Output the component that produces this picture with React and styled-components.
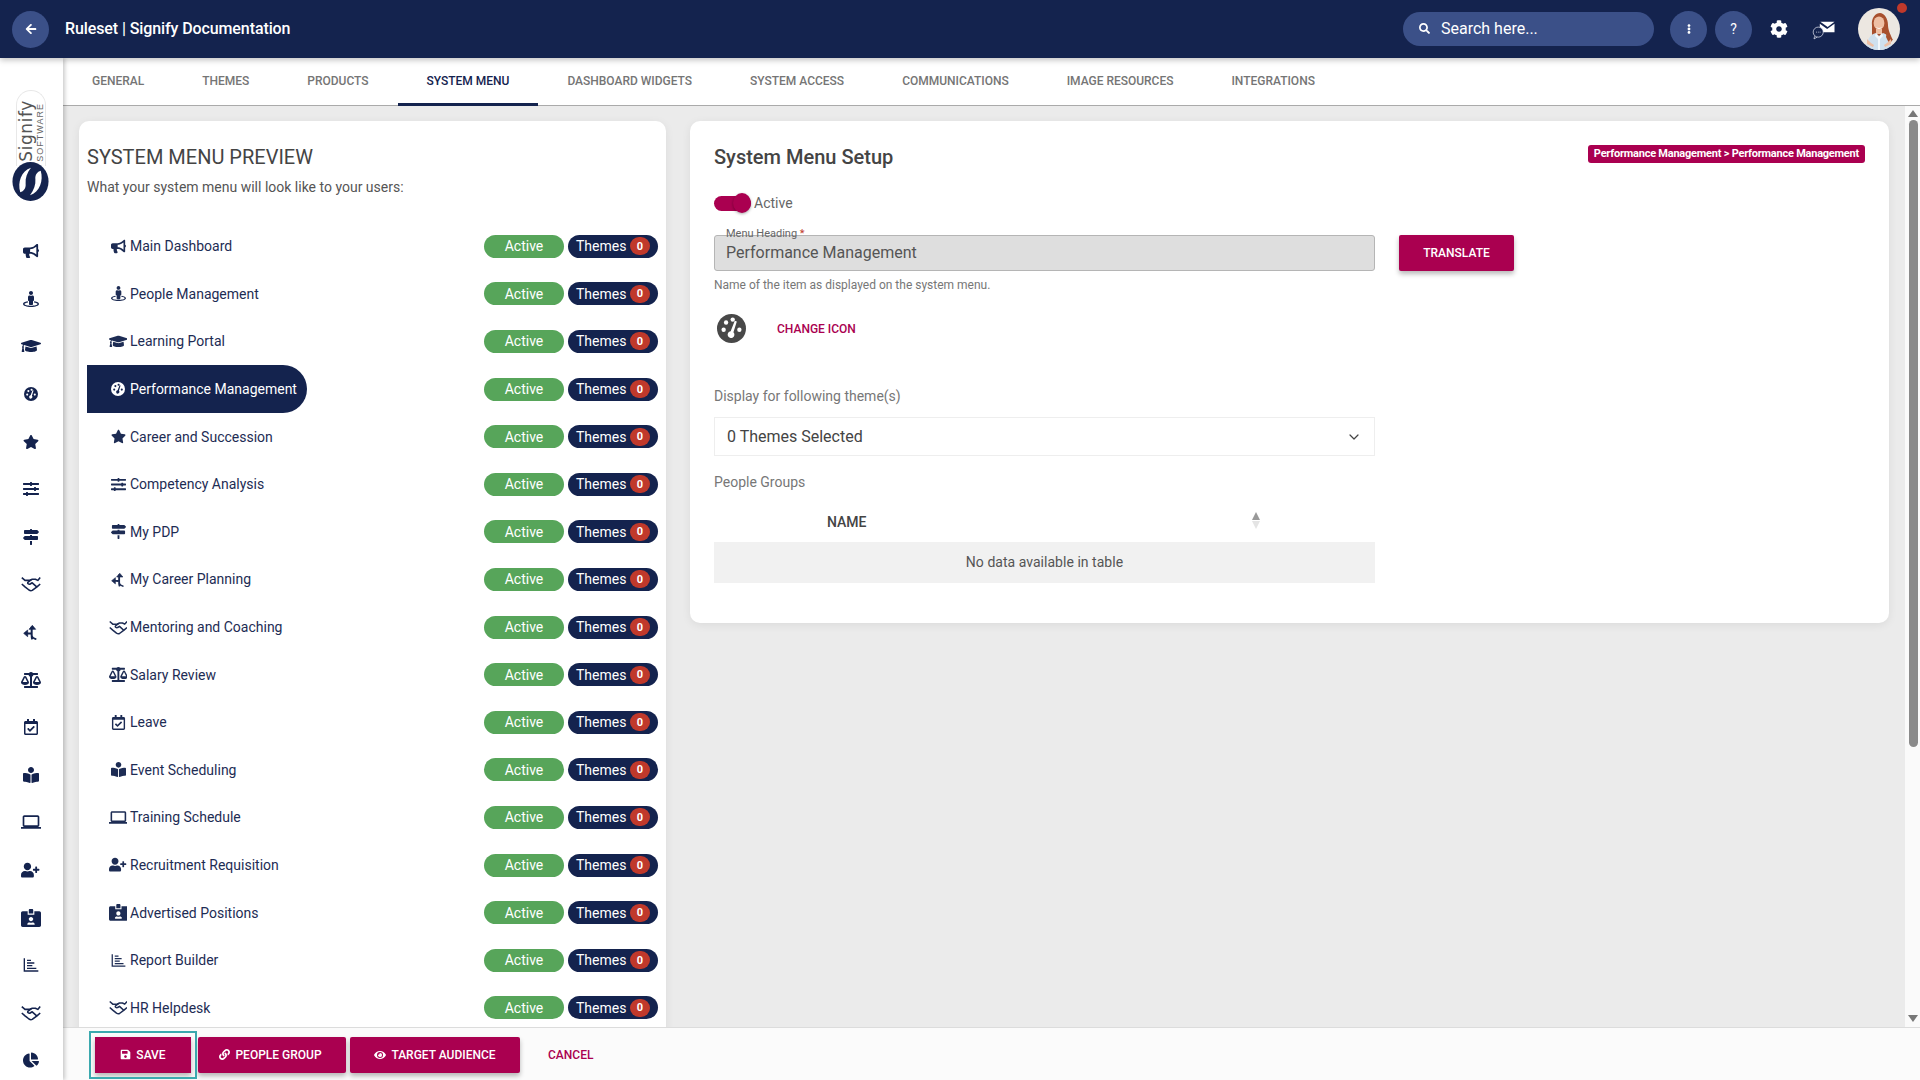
import React from "react";
import styled, { createGlobalStyle } from "styled-components";
import {
  FaArrowLeft, FaBalanceScale, FaBookReader, FaBullhorn, FaChartPie, FaCog, FaEllipsisV, FaEye,
  FaGraduationCap, FaIdCardAlt, FaLink, FaMapSigns, FaRegCalendarCheck,
  FaSave, FaSearch, FaSlidersH, FaStar, FaStreetView, FaUserPlus,
} from "react-icons/fa";
import { MdLaptop } from "react-icons/md";
import { ChevronDown } from "lucide-react";

const NAVY = "#14234e";
const BLUE = "#3b5088";
const WINE = "#aa0050";

const GlobalStyle = createGlobalStyle`
  html, body { margin: 0; padding: 0; height: 100%; overflow: hidden; }
  body { font-family: Roboto, "Liberation Sans", sans-serif; background: #ebebeb; }
  * { box-sizing: border-box; }
`;

const Page = styled.div`
  display: flex;
  flex-direction: column;
  height: 100vh;
`;

const Header = styled.header`
  display: flex;
  align-items: center;
  flex: 0 0 58px;
  padding: 0 20px 0 12px;
  background: ${NAVY};
  color: #fff;
  box-shadow: 0 2px 6px rgba(0, 0, 0, 0.25);
  position: relative;
  z-index: 3;
`;

const RoundButton = styled.div`
  display: flex;
  align-items: center;
  justify-content: center;
  width: 37px;
  height: 37px;
  border-radius: 50%;
  background: ${BLUE};
  font-size: 14px;
  margin-left: ${(p) => p.$gap || 0}px;
`;

const PageTitle = styled.div`
  margin-left: 16px;
  padding-bottom: 2px;
  font-size: 16px;
  font-weight: 500;
  letter-spacing: -0.1px;
  flex: 1;
`;

const Search = styled.div`
  display: flex;
  align-items: center;
  gap: 11px;
  width: 251px;
  height: 34px;
  padding: 0 0 2px 16px;
  border-radius: 17px;
  background: ${BLUE};
  font-size: 16px;
`;

const PlainIcon = styled.div`
  display: flex;
  align-items: center;
  justify-content: center;
  width: 24px;
  font-size: 18px;
  margin-left: ${(p) => p.$gap}px;
`;

const Avatar = styled.div`
  position: relative;
  width: 42px;
  height: 42px;
  margin-left: 22px;
  svg { display: block; border-radius: 50%; }
`;

const Dot = styled.span`
  position: absolute;
  top: -5px;
  right: -7px;
  width: 10px;
  height: 10px;
  border-radius: 50%;
  background: #c0392b;
`;

const Body = styled.div`
  display: flex;
  flex: 1;
  min-height: 0;
`;

const Sidebar = styled.nav`
  display: flex;
  flex-direction: column;
  align-items: center;
  flex: 0 0 63px;
  padding: 32px 2px 0 0;
  background: #fff;
  color: ${NAVY};
  box-shadow: 2px 0 4px rgba(0, 0, 0, 0.2);
  position: relative;
  z-index: 2;
  overflow: hidden;
`;

const Logo = styled.div`
  display: flex;
  flex: none;
  flex-direction: column;
  align-items: center;
  margin-bottom: 26.5px;
`;

const LogoPill = styled.div`
  display: flex;
  flex: none;
  justify-content: center;
  align-items: flex-end;
  width: 30px;
  height: 76px;
  border: 1px solid #e8e8e8;
  border-bottom: 0;
  border-radius: 15px 15px 0 0;
`;

const LogoText = styled.div`
  display: flex;
  flex-direction: column;
  writing-mode: vertical-rl;
  transform: rotate(180deg);
  padding-top: 4px;
`;

const LogoName = styled.span`
  font-family: "DejaVu Sans", sans-serif;
  font-size: 17px;
  line-height: 20px;
  letter-spacing: 0.6px;
  color: #555;
`;

const LogoSub = styled.span`
  font-family: "Liberation Sans", sans-serif;
  font-size: 9px;
  line-height: 9px;
  letter-spacing: 1px;
  color: #666;
`;

const LogoMark = styled.svg`
  display: block;
  flex: none;
  margin-top: -4px;
`;

const SideIcon = styled.div`
  display: flex;
  flex: 0 0 47.6px;
  align-items: center;
  justify-content: center;
  font-size: 16px;
  svg { flex: none; }
`;

const Main = styled.main`
  display: flex;
  flex-direction: column;
  flex: 1;
  min-width: 0;
`;

const Tabs = styled.div`
  display: flex;
  flex: 0 0 48px;
  background: #fff;
  border-bottom: 1px solid #aaa;
`;

const Tab = styled.div`
  display: flex;
  align-items: center;
  padding: 1px 29px 0;
  font-size: 12px;
  font-weight: 500;
  letter-spacing: -0.01px;
  text-transform: uppercase;
  color: ${(p) => (p.$active ? NAVY : "#757575")};
  border-bottom: 3px solid ${(p) => (p.$active ? NAVY : "transparent")};
  margin-bottom: -1px;
`;

const Workspace = styled.div`
  display: flex;
  flex: 1;
  min-height: 0;
`;

const Cards = styled.div`
  display: grid;
  grid-template-columns: 587px 1fr;
  align-items: start;
  gap: 24px;
  flex: 1;
  padding: 15px 16px 0;
  overflow: hidden;
`;

const Card = styled.section`
  background: #fff;
  border-radius: 10px 10px ${(p) => (p.$open ? "0 0" : "10px 10px")};
  box-shadow: 0 2px 10px rgba(0, 0, 0, 0.07);
`;

const PreviewCard = styled(Card)`
  height: 940px;
  padding: 24px 8px 0;
`;

const PreviewTitle = styled.h2`
  margin: 0;
  font-size: 20px;
  line-height: 24px;
  font-weight: 400;
  color: #444;
`;

const PreviewSub = styled.p`
  margin: 8px 0 25.5px;
  font-size: 14px;
  line-height: 20px;
  color: #555;
`;

const Row = styled.div`
  display: flex;
  align-items: center;
  justify-content: space-between;
  height: 47.6px;
`;

const RowLabel = styled.div`
  display: flex;
  align-items: center;
  height: 48px;
  padding: 0 10px 0 23px;
  border-radius: 0 24px 24px 0;
  font-size: 14px;
  color: ${(p) => (p.$active ? "#fff" : "#1d2c54")};
  background: ${(p) => (p.$active ? NAVY : "transparent")};
`;

const RowIcon = styled.span`
  display: flex;
  align-items: center;
  justify-content: center;
  width: 16px;
  margin-right: 4px;
  font-size: 15px;
  svg { flex: none; }
`;

const Badges = styled.div`
  display: flex;
  gap: 4px;
`;

const ActiveBadge = styled.span`
  display: flex;
  align-items: center;
  justify-content: center;
  width: 80px;
  height: 23px;
  border-radius: 12px;
  background: #57a55a;
  color: #fff;
  font-size: 14px;
`;

const ThemeBadge = styled.span`
  display: flex;
  align-items: center;
  justify-content: space-between;
  width: 90px;
  height: 23px;
  padding: 0 8px;
  border-radius: 12px;
  background: ${NAVY};
  color: #fff;
  font-size: 14px;
`;

const Count = styled.span`
  display: flex;
  align-items: center;
  justify-content: center;
  width: 20px;
  height: 18px;
  border-radius: 9px;
  background: #c0392b;
  font-size: 11px;
  font-weight: 700;
`;

const SetupCard = styled(Card)`
  padding: 24px 24px 40px;
`;

const SetupHead = styled.div`
  display: flex;
  align-items: flex-start;
  justify-content: space-between;
`;

const SetupTitle = styled.h2`
  margin: 0;
  font-size: 20px;
  line-height: 24px;
  font-weight: 500;
  color: #444;
`;

const Crumb = styled.span`
  padding: 0 6px;
  height: 18px;
  line-height: 18px;
  border-radius: 3px;
  background: ${WINE};
  color: #fff;
  font-size: 11px;
  font-weight: 700;
  letter-spacing: -0.23px;
`;

const ToggleRow = styled.div`
  display: flex;
  align-items: center;
  height: 20px;
  margin-top: 24px;
  font-size: 14px;
  color: #666;
`;

const Toggle = styled.span`
  position: relative;
  width: 37px;
  height: 15px;
  margin-right: 3px;
  border-radius: 8px;
  background: ${WINE};
  &::after {
    content: "";
    position: absolute;
    right: 0;
    top: -3px;
    width: 18px;
    height: 20px;
    border-radius: 50%;
    background: ${WINE};
    box-shadow: 0 1px 3px rgba(0, 0, 0, 0.35);
  }
`;

const FieldRow = styled.div`
  display: flex;
  gap: 24px;
  margin-top: 22px;
`;

const Field = styled.div`
  position: relative;
  width: 661px;
  height: 36px;
  padding-left: 11px;
  border: 1px solid #b5b5b5;
  border-radius: 3px;
  background: #dedede;
  font-size: 16px;
  line-height: 34px;
  color: #555;
`;

const Legend = styled.label`
  position: absolute;
  left: 7px;
  top: -8px;
  padding: 0 4px;
  font-size: 11px;
  line-height: 12px;
  color: #666;
  background: linear-gradient(#fff 50%, transparent 50%);
  b { color: #c0392b; font-weight: 400; }
`;

const WineButton = styled.button`
  display: inline-flex;
  align-items: center;
  justify-content: center;
  gap: 5px;
  width: ${(p) => p.$width}px;
  height: 36px;
  padding: 0;
  border: 0;
  border-radius: 2px;
  background: ${WINE};
  color: #fff;
  font-family: inherit;
  font-size: 12px;
  font-weight: 500;
  text-transform: uppercase;
  box-shadow: 0 3px 5px rgba(0, 0, 0, 0.28);
`;

const Help = styled.div`
  margin-top: 6px;
  font-size: 12px;
  line-height: 16px;
  color: #777;
`;

const IconRow = styled.div`
  display: flex;
  align-items: center;
  height: 30px;
  margin-top: 20px;
  padding-left: 3px;
  color: #484848;
`;

const ChangeIcon = styled.span`
  margin: 2px 0 0 31px;
  font-size: 12px;
  font-weight: 500;
  text-transform: uppercase;
  color: ${WINE};
`;

const FieldLabel = styled.div`
  margin-top: ${(p) => p.$top}px;
  font-size: 14px;
  line-height: 20px;
  color: #777;
`;

const Select = styled.div`
  display: flex;
  align-items: center;
  justify-content: space-between;
  width: 661px;
  height: 39px;
  margin-top: 11px;
  padding: 0 12px;
  border: 1px solid #eee;
  font-size: 16px;
  color: #444;
`;

const Table = styled.div`
  width: 661px;
  margin-top: 10px;
`;

const TableHead = styled.div`
  display: flex;
  align-items: center;
  justify-content: space-between;
  height: 40px;
  padding: 0 115px 0 113px;
  font-size: 14px;
  font-weight: 500;
  color: #444;
`;

const SortArrows = styled.span`
  display: flex;
  flex-direction: column;
  gap: 1px;
  margin-top: -3px;
  &::before, &::after {
    content: "";
    border-left: 4px solid transparent;
    border-right: 4px solid transparent;
  }
  &::before { border-bottom: 8px solid #999; }
  &::after { border-top: 8px solid #e4e4e4; }
`;

const EmptyRow = styled.div`
  display: flex;
  align-items: center;
  justify-content: center;
  height: 41px;
  padding-bottom: 1px;
  background: #f1f1f1;
  font-size: 14px;
  letter-spacing: 0.03px;
  color: #555;
`;

const Scrollbar = styled.div`
  display: flex;
  flex-direction: column;
  align-items: center;
  flex: 0 0 15px;
  background: #fafafa;
  padding: 4px 0 5px 1px;
`;

const Arrow = styled.span`
  border-left: 5px solid transparent;
  border-right: 5px solid transparent;
  ${(p) => (p.$down ? "border-top" : "border-bottom")}: 7px solid #777;
`;

const Thumb = styled.div`
  width: 9px;
  height: 627px;
  margin: 3px 0 auto;
  border-radius: 5px;
  background: #8a8a8a;
`;

const Footer = styled.footer`
  display: flex;
  align-items: center;
  flex: 0 0 53px;
  padding: 1px 0 0 32px;
  background: #fbfbfb;
  border-top: 1px solid #dcdcdc;
  position: relative;
  z-index: 1;
`;

const Actions = styled.div`
  display: flex;
  gap: 4px;
`;

const SaveButton = styled(WineButton)`
  position: relative;
  z-index: 1;
  margin-right: 3px;
  border-radius: 0;
  outline: 2px solid #3ba9ae;
  outline-offset: 4px;
`;

const GroupButton = styled(WineButton)`
  padding-right: 3px;
`;

const Cancel = styled.span`
  margin-left: 28px;
  font-size: 12px;
  font-weight: 500;
  color: ${WINE};
`;

function Gauge({ size = 14, hole = "#fff" }) {
  return (
    <svg width={size} height={size} viewBox="0 0 24 24" fill="currentColor">
      <circle cx="12" cy="12" r="12" />
      <circle cx="5.5" cy="13" r="1.8" fill={hole} />
      <circle cx="7.5" cy="7" r="1.8" fill={hole} />
      <circle cx="13" cy="4.6" r="1.8" fill={hole} />
      <circle cx="18.5" cy="13" r="1.8" fill={hole} />
      <path d="M16.4 6.2 13.6 15a2.8 2.8 0 1 1-2.3-.8l3.4-8.6z" fill={hole} />
    </svg>
  );
}

function BranchArrow() {
  return (
    <svg width="1em" height="1em" viewBox="0 0 24 24" fill="none" stroke="currentColor" strokeWidth="3">
      <path d="M14 23c-1-2-1-4-1-7V4" />
      <path d="M13 14c-2 1-5 0-8 0" />
      <path d="M9 8l5-6 5 6z" fill="currentColor" strokeWidth="1" />
      <path d="M7 9l-6 5 6 5z" fill="currentColor" strokeWidth="1" />
      <path d="M13 18c1 3 4 4 7 5" strokeWidth="2.4" />
    </svg>
  );
}

function Handshake() {
  return (
    <svg width="1.25em" height="1em" viewBox="0 0 25 20" fill="none" stroke="currentColor" strokeWidth="2" strokeLinejoin="round">
      <path d="M1 2l4 3.500h6l3-1.500h4l3 1.500L24 2" />
      <path d="M13 4.500 8.500 8c-.8 1.500 1.500 3 3 2l2.500-1.500 6 5.500" />
      <path d="M1 10l4 3.500 5 4c1.500 1 3 1 4 .5l6-4.500L24 10" />
    </svg>
  );
}

function ReportChart() {
  return (
    <svg width="1em" height="1em" viewBox="0 0 24 24" fill="none" stroke="currentColor" strokeWidth="2">
      <path d="M2 2v19h21" />
      <path d="M6 5h6M6 9h11M6 13h8M6 17h14" />
    </svg>
  );
}

function MailChat() {
  return (
    <svg width="24" height="21" viewBox="0 0 22 20">
      <path d="M7.5 2.5l7 5 6.5-5z M7 4.5v8h14v-8l-7 5z" fill="#fff" />
      <circle cx="5.5" cy="12.5" r="4.8" fill={NAVY} stroke="#dfe3ee" strokeWidth="0.7" />
      <path d="M3.5 12.5h.7m1 0h.7m1 0h.7" stroke="#dfe3ee" strokeWidth="0.9" />
      <path d="M2 16.5 1.5 19l3-1.8" fill="none" stroke="#dfe3ee" strokeWidth="0.7" />
    </svg>
  );
}

function Portrait() {
  return (
    <svg width="42" height="42" viewBox="0 0 42 42">
      <rect width="42" height="42" fill="#ece7e1" />
      <path d="M14 18c-1-9 4-13 8-13s8 5 8 12c0 5 3 11 5 15l-5 2-16-4z" fill="#a8502e" />
      <ellipse cx="21" cy="15" rx="5.4" ry="6.6" fill="#eebfa4" />
      <path d="M18 19c2 1.4 4 1.4 6 0-1 2.4-5 2.4-6 0z" fill="#fff" />
      <path d="M18 21h6v5h-6z" fill="#eebfa4" />
      <path d="M8 42c0-9 4-16 10-17l3 3 4-3c5 1 9 8 9 17z" fill="#cfe0ee" />
      <path d="M18 25l3 4 3-4 1 3-3 3v11h-2V31l-3-3z" fill="#f2f7fb" />
      <path d="M29 22c2 5 3 9 5 11l-3 2-3-6z" fill="#a8502e" />
      <path d="M9 31l4 4 3 2-1 2-6-3zM33 31l-4 4-3 2 1 2 6-3z" fill="#eebfa4" />
    </svg>
  );
}

// these glyphs are wider than they are tall, so they get a bigger box
const wide = (Icon) => () => <Icon size="1.25em" />;
const Scale = wide(FaBalanceScale);
const GradCap = wide(FaGraduationCap);
const Laptop = wide(MdLaptop);
const IdCard = wide(FaIdCardAlt);
const UserPlus = () => <FaUserPlus size="1.15em" />;

const tabs = ["General", "Themes", "Products", "System Menu", "Dashboard Widgets", "System Access", "Communications", "Image Resources", "Integrations"];

const menu = [
  ["Main Dashboard", FaBullhorn],
  ["People Management", FaStreetView],
  ["Learning Portal", GradCap],
  ["Performance Management", Gauge],
  ["Career and Succession", FaStar],
  ["Competency Analysis", FaSlidersH],
  ["My PDP", FaMapSigns],
  ["My Career Planning", BranchArrow],
  ["Mentoring and Coaching", Handshake],
  ["Salary Review", Scale],
  ["Leave", FaRegCalendarCheck],
  ["Event Scheduling", FaBookReader],
  ["Training Schedule", Laptop],
  ["Recruitment Requisition", UserPlus],
  ["Advertised Positions", IdCard],
  ["Report Builder", ReportChart],
  ["HR Helpdesk", Handshake],
];

const sideIcons = [
  FaBullhorn, FaStreetView, GradCap, Gauge, FaStar, FaSlidersH, FaMapSigns, Handshake, BranchArrow,
  Scale, FaRegCalendarCheck, FaBookReader, Laptop, UserPlus, IdCard, ReportChart, Handshake, FaChartPie,
];

export default function App() {
  return (
    <Page>
      <GlobalStyle />
      <Header>
        <RoundButton><FaArrowLeft size={12} /></RoundButton>
        <PageTitle>Ruleset | Signify Documentation</PageTitle>
        <Search><FaSearch size={11} />Search here...</Search>
        <RoundButton $gap={16}><FaEllipsisV size={10} /></RoundButton>
        <RoundButton $gap={8}>?</RoundButton>
        <PlainIcon $gap={15}><FaCog /></PlainIcon>
        <PlainIcon $gap={21}><MailChat /></PlainIcon>
        <Avatar>
          <Portrait />
          <Dot />
        </Avatar>
      </Header>
      <Body>
        <Sidebar>
          <Logo>
            <LogoPill>
              <LogoText>
                <LogoName>Signify</LogoName>
                <LogoSub>SOFTWARE</LogoSub>
              </LogoText>
            </LogoPill>
            <LogoMark width="37" height="39" viewBox="0 0 37 40">
              <ellipse cx="18.5" cy="20" rx="18.5" ry="20" fill={NAVY} />
              <path d="M8 31C5 21 9 9 19 6c-4 5-6 11-5.5 16 .5 5-2 8-5.500 9zM29 9c3 10-1 22-11 25 4-5 6-11 5.500-16-.5-5 2-8 5.500-9z" fill="#fff" />
            </LogoMark>
          </Logo>
          {sideIcons.map((Icon, i) => (
            <SideIcon key={i}><Icon hole="#fff" /></SideIcon>
          ))}
        </Sidebar>
        <Main>
          <Tabs>
            {tabs.map((t) => (
              <Tab key={t} $active={t === "System Menu"}>{t}</Tab>
            ))}
          </Tabs>
          <Workspace>
            <Cards>
              <PreviewCard $open>
                <PreviewTitle>SYSTEM MENU PREVIEW</PreviewTitle>
                <PreviewSub>What your system menu will look like to your users:</PreviewSub>
                {menu.map(([name, Icon]) => {
                  const active = name === "Performance Management";
                  return (
                    <Row key={name}>
                      <RowLabel $active={active}>
                        <RowIcon><Icon hole={active ? NAVY : "#fff"} /></RowIcon>
                        {name}
                      </RowLabel>
                      <Badges>
                        <ActiveBadge>Active</ActiveBadge>
                        <ThemeBadge>Themes<Count>0</Count></ThemeBadge>
                      </Badges>
                    </Row>
                  );
                })}
              </PreviewCard>
              <SetupCard>
                <SetupHead>
                  <SetupTitle>System Menu Setup</SetupTitle>
                  <Crumb>Performance Management &gt; Performance Management</Crumb>
                </SetupHead>
                <ToggleRow><Toggle />Active</ToggleRow>
                <FieldRow>
                  <Field>
                    <Legend>Menu Heading <b>*</b></Legend>
                    Performance Management
                  </Field>
                  <WineButton $width={115}>Translate</WineButton>
                </FieldRow>
                <Help>Name of the item as displayed on the system menu.</Help>
                <IconRow>
                  <Gauge size={29} />
                  <ChangeIcon>Change Icon</ChangeIcon>
                </IconRow>
                <FieldLabel $top={43}>Display for following theme(s)</FieldLabel>
                <Select>0 Themes Selected<ChevronDown size={16} strokeWidth={1.8} /></Select>
                <FieldLabel $top={16}>People Groups</FieldLabel>
                <Table>
                  <TableHead>NAME<SortArrows /></TableHead>
                  <EmptyRow>No data available in table</EmptyRow>
                </Table>
              </SetupCard>
            </Cards>
            <Scrollbar>
              <Arrow />
              <Thumb />
              <Arrow $down />
            </Scrollbar>
          </Workspace>
          <Footer>
            <Actions>
              <SaveButton $width={96}><FaSave size={11} />Save</SaveButton>
              <GroupButton $width={148}><FaLink size={11} />People Group</GroupButton>
              <WineButton $width={170}><FaEye size={12} />Target Audience</WineButton>
            </Actions>
            <Cancel>CANCEL</Cancel>
          </Footer>
        </Main>
      </Body>
    </Page>
  );
}
